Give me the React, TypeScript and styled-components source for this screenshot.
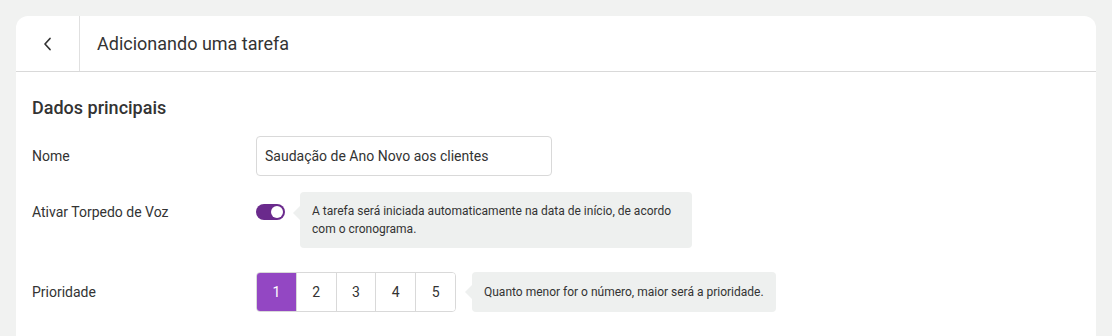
import React from "react";
import styled, { createGlobalStyle } from "styled-components";

const Global = createGlobalStyle`
  html, body { margin: 0; padding: 0; background: #f1f2f1; }
  body { font-family: Roboto, "Noto Sans", sans-serif; color: #333; }
  * { box-sizing: border-box; }
`;

const Page = styled.div`
  padding: 16px 16px 0 16px;
  height: 336px;
  overflow: hidden;
`;

const Card = styled.div`
  background: #fff;
  border-radius: 12px 12px 0 0;
  min-height: 340px;
`;

const Header = styled.div`
  display: flex;
  align-items: stretch;
  height: 56px;
  border-bottom: 1px solid #d9d9d9;
`;

const BackCell = styled.div`
  width: 64px;
  display: flex;
  align-items: center;
  justify-content: center;
  border-right: 1px solid #e0e0e0;
  color: #333;
`;

const Title = styled.h1`
  margin: 0;
  padding-left: 17px;
  display: flex;
  align-items: center;
  font-size: 18px;
  font-weight: 400;
  color: #333;
`;

const Body = styled.div`
  padding: 25px 16px 0 16px;
`;

const SectionTitle = styled.h2`
  margin: 0 0 17px 0;
  font-size: 18px;
  font-weight: 500;
  color: #333;
  line-height: 22px;
`;

const Row = styled.div<{ $mb: number }>`
  display: grid;
  grid-template-columns: 224px 1fr;
  align-items: start;
  margin-bottom: ${(p) => p.$mb}px;
`;

const Label = styled.div<{ $pt: number }>`
  font-size: 14px;
  line-height: 20px;
  padding-top: ${(p) => p.$pt}px;
  color: #333;
`;

const Input = styled.div`
  width: 296px;
  height: 40px;
  border: 1px solid #d9d9d9;
  border-radius: 4px;
  padding: 0 8px;
  display: flex;
  align-items: center;
  font-size: 14px;
  color: #333;
`;

const Inline = styled.div`
  display: flex;
  align-items: flex-start;
`;

const Toggle = styled.div`
  width: 29px;
  height: 16px;
  margin-top: 12px;
  border-radius: 8px;
  background: #6a2a8c;
  display: flex;
  align-items: center;
  justify-content: flex-end;
  padding-right: 2px;
  flex-shrink: 0;
`;

const Knob = styled.div`
  width: 12px;
  height: 12px;
  border-radius: 50%;
  background: #fff;
`;

const Hint = styled.div<{ $ml: number; $w?: number; $h: number }>`
  position: relative;
  margin-left: ${(p) => p.$ml}px;
  ${(p) => (p.$w ? `width: ${p.$w}px;` : "")}
  min-height: ${(p) => p.$h}px;
  background: #eef0ef;
  border-radius: 4px;
  padding: 0 12px;
  display: flex;
  align-items: center;
  font-size: 12px;
  line-height: 18px;
  color: #333;
  &::before {
    content: "";
    position: absolute;
    left: -7px;
    top: ${(p) => (p.$h > 45 ? 14 : 13)}px;
    border-top: 7px solid transparent;
    border-bottom: 7px solid transparent;
    border-right: 7px solid #eef0ef;
  }
`;

const Seg = styled.div`
  display: flex;
  width: 200px;
  border: 1px solid #d9d9d9;
  border-radius: 4px;
  overflow: hidden;
  height: 40px;
  flex-shrink: 0;
`;

const SegBtn = styled.div<{ $active: boolean }>`
  flex: 1;
  display: flex;
  align-items: center;
  justify-content: center;
  font-size: 14px;
  color: ${(p) => (p.$active ? "#fff" : "#333")};
  background: ${(p) => (p.$active ? "#9347c3" : "#fff")};
  & + & { border-left: 1px solid #d9d9d9; }
`;

export default function App() {
  return (
    <>
      <Global />
      <Page>
        <Card>
          <Header>
            <BackCell>
              <svg width="16" height="16" viewBox="0 0 16 16" fill="none">
                <path d="M10 2.5 L5 8 L10 13.5" stroke="#333" strokeWidth="1.7" strokeLinecap="round" strokeLinejoin="round" />
              </svg>
            </BackCell>
            <Title>Adicionando uma tarefa</Title>
          </Header>
          <Body>
            <SectionTitle>Dados principais</SectionTitle>
            <Row $mb={16}>
              <Label $pt={10}>Nome</Label>
              <Input>Saudação de Ano Novo aos clientes</Input>
            </Row>
            <Row $mb={24}>
              <Label $pt={10}>Ativar Torpedo de Voz</Label>
              <Inline>
                <Toggle>
                  <Knob />
                </Toggle>
                <Hint $ml={15} $w={392} $h={56}>
                  A tarefa será iniciada automaticamente na data de início, de acordo com o cronograma.
                </Hint>
              </Inline>
            </Row>
            <Row $mb={0}>
              <Label $pt={10}>Prioridade</Label>
              <Inline>
                <Seg>
                  {[1, 2, 3, 4, 5].map((n) => (
                    <SegBtn key={n} $active={n === 1}>{n}</SegBtn>
                  ))}
                </Seg>
                <Hint $ml={16} $h={40}>
                  Quanto menor for o número, maior será a prioridade.
                </Hint>
              </Inline>
            </Row>
          </Body>
        </Card>
      </Page>
    </>
  );
}
